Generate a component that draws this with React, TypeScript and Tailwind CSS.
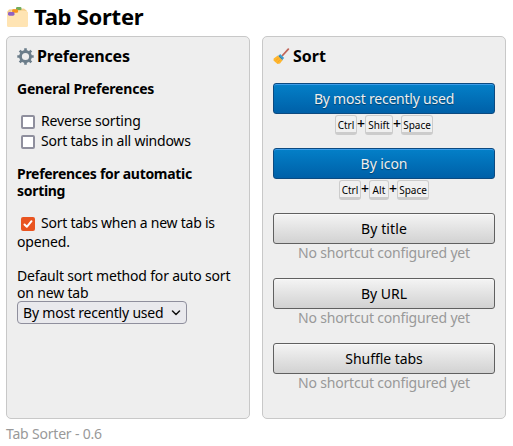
import type { ReactNode } from "react";

function DividersIcon() {
  return (
    <svg width="21" height="20" viewBox="0 0 21 20" className="shrink-0">
      <path d="M0 5 2 2.500 17 1.500l2.500 2 1 2V14H0z" fill="#f6cf8c" />
      <rect x="9" y="0" width="5.500" height="3.200" rx="1.200" fill="#73ad5b" />
      <path d="M4 3.500h13.500l2.200 3H4z" fill="#fbdca4" />
      <path d="M0 5.500h11.500L13 4h6.500l1.500 1.500v13.500l-.8 1H.8l-.8-1z" fill="#ffe4b3" />
      <rect x="5.200" y="2.200" width="5.800" height="3.600" rx="1.200" fill="#f7931e" />
      <rect x="1" y="5" width="6.500" height="3.700" rx="1.400" fill="#9062c4" />
    </svg>
  );
}

function GearIcon() {
  return (
    <svg width="17" height="17" viewBox="0 0 17 17" className="shrink-0">
      <path
        d="M8.500.300v16.400M.300 8.500h16.400M2.700 2.700l11.600 11.600M14.300 2.700 2.700 14.300"
        stroke="#6b7d8a"
        strokeWidth="2.600"
      />
      <circle cx="8.500" cy="8.500" r="5" fill="#eee" stroke="#6b7d8a" strokeWidth="2.800" />
    </svg>
  );
}

function BroomIcon() {
  return (
    <svg width="17" height="17" viewBox="0 0 17 17" className="shrink-0">
      <path d="m9.500 7.500 5.800-6.300" stroke="#c1665a" strokeWidth="1.800" strokeLinecap="round" />
      <path d="M4.800 7.600 9.500 12.200 7 15.400 4.500 16 .500 12.500.700 10.600z" fill="#fdb62f" />
      <path d="M2.500 12.800 5.500 10M4.500 14.500l2.500-2.700" stroke="#f9a01b" strokeWidth=".8" />
      <path d="m6.300 7 4 3.800" stroke="#3d9ccc" strokeWidth="2.500" />
      <path d="m5.700 8 3.800 3.700" stroke="#3a6f91" strokeWidth="1" />
    </svg>
  );
}

function Panel({ children }: { children: ReactNode }) {
  return (
    <section className="h-[383px] w-[244px] rounded-[5px] border border-[#c8c8c8] bg-[#eee] px-[10px] pt-[9px]">
      {children}
    </section>
  );
}

function Checkbox({ checked = false }: { checked?: boolean }) {
  return checked ? (
    <span className="mr-[6px] ml-1 inline-flex size-[14px] items-center justify-center rounded-[2px] bg-[#e95420] align-[-3px]">
      <svg width="14" height="14" viewBox="0 0 14 14" fill="none" stroke="#fff" strokeWidth="2" strokeLinecap="round" strokeLinejoin="round">
        <path d="m3.500 7.500 2.300 2.300 4.700-5.600" />
      </svg>
    </span>
  ) : (
    <span className="mr-[6px] ml-1 inline-block size-[14px] rounded-[2px] border-2 border-[#8f8f9d] bg-white align-[-3px]" />
  );
}

function SortButton({ label, tracking, primary = false }: { label: string; tracking: string; primary?: boolean }) {
  const look = primary
    ? "border-[#0c4a80] bg-linear-to-b from-[#0480c8] to-[#0060a8] text-[#eee] shadow-[inset_0_1px_0_#3d9ce8] [text-shadow:0_1px_1px_rgba(0,0,0,0.4)]"
    : "border-[#606060] bg-linear-to-b from-[#f4f4f4] to-[#d2d2d2] text-black shadow-[inset_0_1px_0_#fafafa]";
  return (
    <button className={`block h-[31px] w-full rounded-[3px] border text-center leading-[29px] ${look} ${tracking}`}>
      {label}
    </button>
  );
}

function Key({ children, className }: { children: string; className: string }) {
  return (
    <kbd
      className={`mt-px flex h-[20px] items-start justify-center rounded-[3px] border border-b-[3px] border-[#ccc] bg-[#f0f0f0] font-['Noto_Sans',sans-serif] text-[10px] leading-[18px] text-black ${className}`}
    >
      {children}
    </kbd>
  );
}

function Plus() {
  return <span className="w-2 text-center text-[14px] leading-[19px] font-medium">+</span>;
}

function NoShortcut() {
  return <p className="text-center leading-[18px] tracking-[-0.19px] text-[#999]">No shortcut configured yet</p>;
}

export default function App() {
  return (
    <main className="h-[446px] w-[513px] bg-white px-[6px] font-['Noto_Sans',sans-serif] text-[14px] text-black">
      <header className="flex h-9 items-start gap-[6px] pt-[7px]">
        <span className="ml-px">
          <DividersIcon />
        </span>
        <h1 className="-mt-[6px] text-[22px] leading-[30px] font-bold tracking-[-0.26px]">Tab Sorter</h1>
      </header>
      <div className="flex gap-3">
        <Panel>
          <h2 className="flex h-[20px] items-center gap-[3px] text-[16px] leading-5 font-bold tracking-[-0.17px]">
            <GearIcon />
            Preferences
          </h2>
          <h3 className="mt-[14px] leading-[18px] font-bold tracking-[-0.2px]">General Preferences</h3>
          <ul className="mt-[13px] leading-[20px]">
            <li className="h-5 tracking-[-0.17px]">
              <Checkbox />
              Reverse sorting
            </li>
            <li className="h-5 tracking-[-0.22px]">
              <Checkbox />
              Sort tabs in all windows
            </li>
          </ul>
          <h3 className="mt-[14px] leading-[17px] font-bold tracking-[-0.3px]">
            Preferences for automatic
            <br />
            sorting
          </h3>
          <p className="mt-[14px] leading-[19px]">
            <span className="block h-[19px] tracking-[-0.24px]">
              <Checkbox checked />
              Sort tabs when a new tab is
            </span>
            <span className="block tracking-[-0.16px]">opened.</span>
          </p>
          <p className="mt-[16px] leading-[17px] tracking-[-0.18px]">
            Default sort method for auto sort
            <br />
            on new tab
          </p>
          <button className="flex h-[23px] w-[170px] items-center justify-between rounded-[4px] border border-[#8f8f9d] bg-[#e9e9ed] pr-[5px] pl-[5px] leading-[21px] tracking-[-0.21px]">
            By most recently used
            <svg width="10" height="6" viewBox="0 0 10 6" fill="none" stroke="#111" strokeWidth="1.500" strokeLinecap="round" strokeLinejoin="round">
              <path d="m1.500 1 3.500 3.500L8.500 1" />
            </svg>
          </button>
        </Panel>
        <Panel>
          <h2 className="flex h-[20px] items-center gap-[3px] text-[16px] leading-5 font-bold">
            <BroomIcon />
            Sort
          </h2>
          <div className="mt-[17px] grid auto-rows-[65px]">
            <div>
              <SortButton label="By most recently used" tracking="tracking-[-0.22px]" primary />
              <div className="flex justify-center">
                <Key className="w-[22px]">Ctrl</Key>
                <Plus />
                <Key className="w-[28px]">Shift</Key>
                <Plus />
                <Key className="w-[32px]">Space</Key>
              </div>
            </div>
            <div>
              <SortButton label="By icon" tracking="tracking-[-0.08px]" primary />
              <div className="flex justify-center">
                <Key className="w-[22px]">Ctrl</Key>
                <Plus />
                <Key className="w-[20px] tracking-[0.2px]">Alt</Key>
                <Plus />
                <Key className="w-[32px]">Space</Key>
              </div>
            </div>
            <div>
              <SortButton label="By title" tracking="tracking-[0.1px]" />
              <NoShortcut />
            </div>
            <div>
              <SortButton label="By URL" tracking="tracking-normal" />
              <NoShortcut />
            </div>
            <div>
              <SortButton label="Shuffle tabs" tracking="tracking-[-0.05px]" />
              <NoShortcut />
            </div>
          </div>
        </Panel>
      </div>
      <footer className="mt-[6px] leading-[18px] tracking-[-0.2px] text-[#999]">Tab Sorter - 0.6</footer>
    </main>
  );
}
